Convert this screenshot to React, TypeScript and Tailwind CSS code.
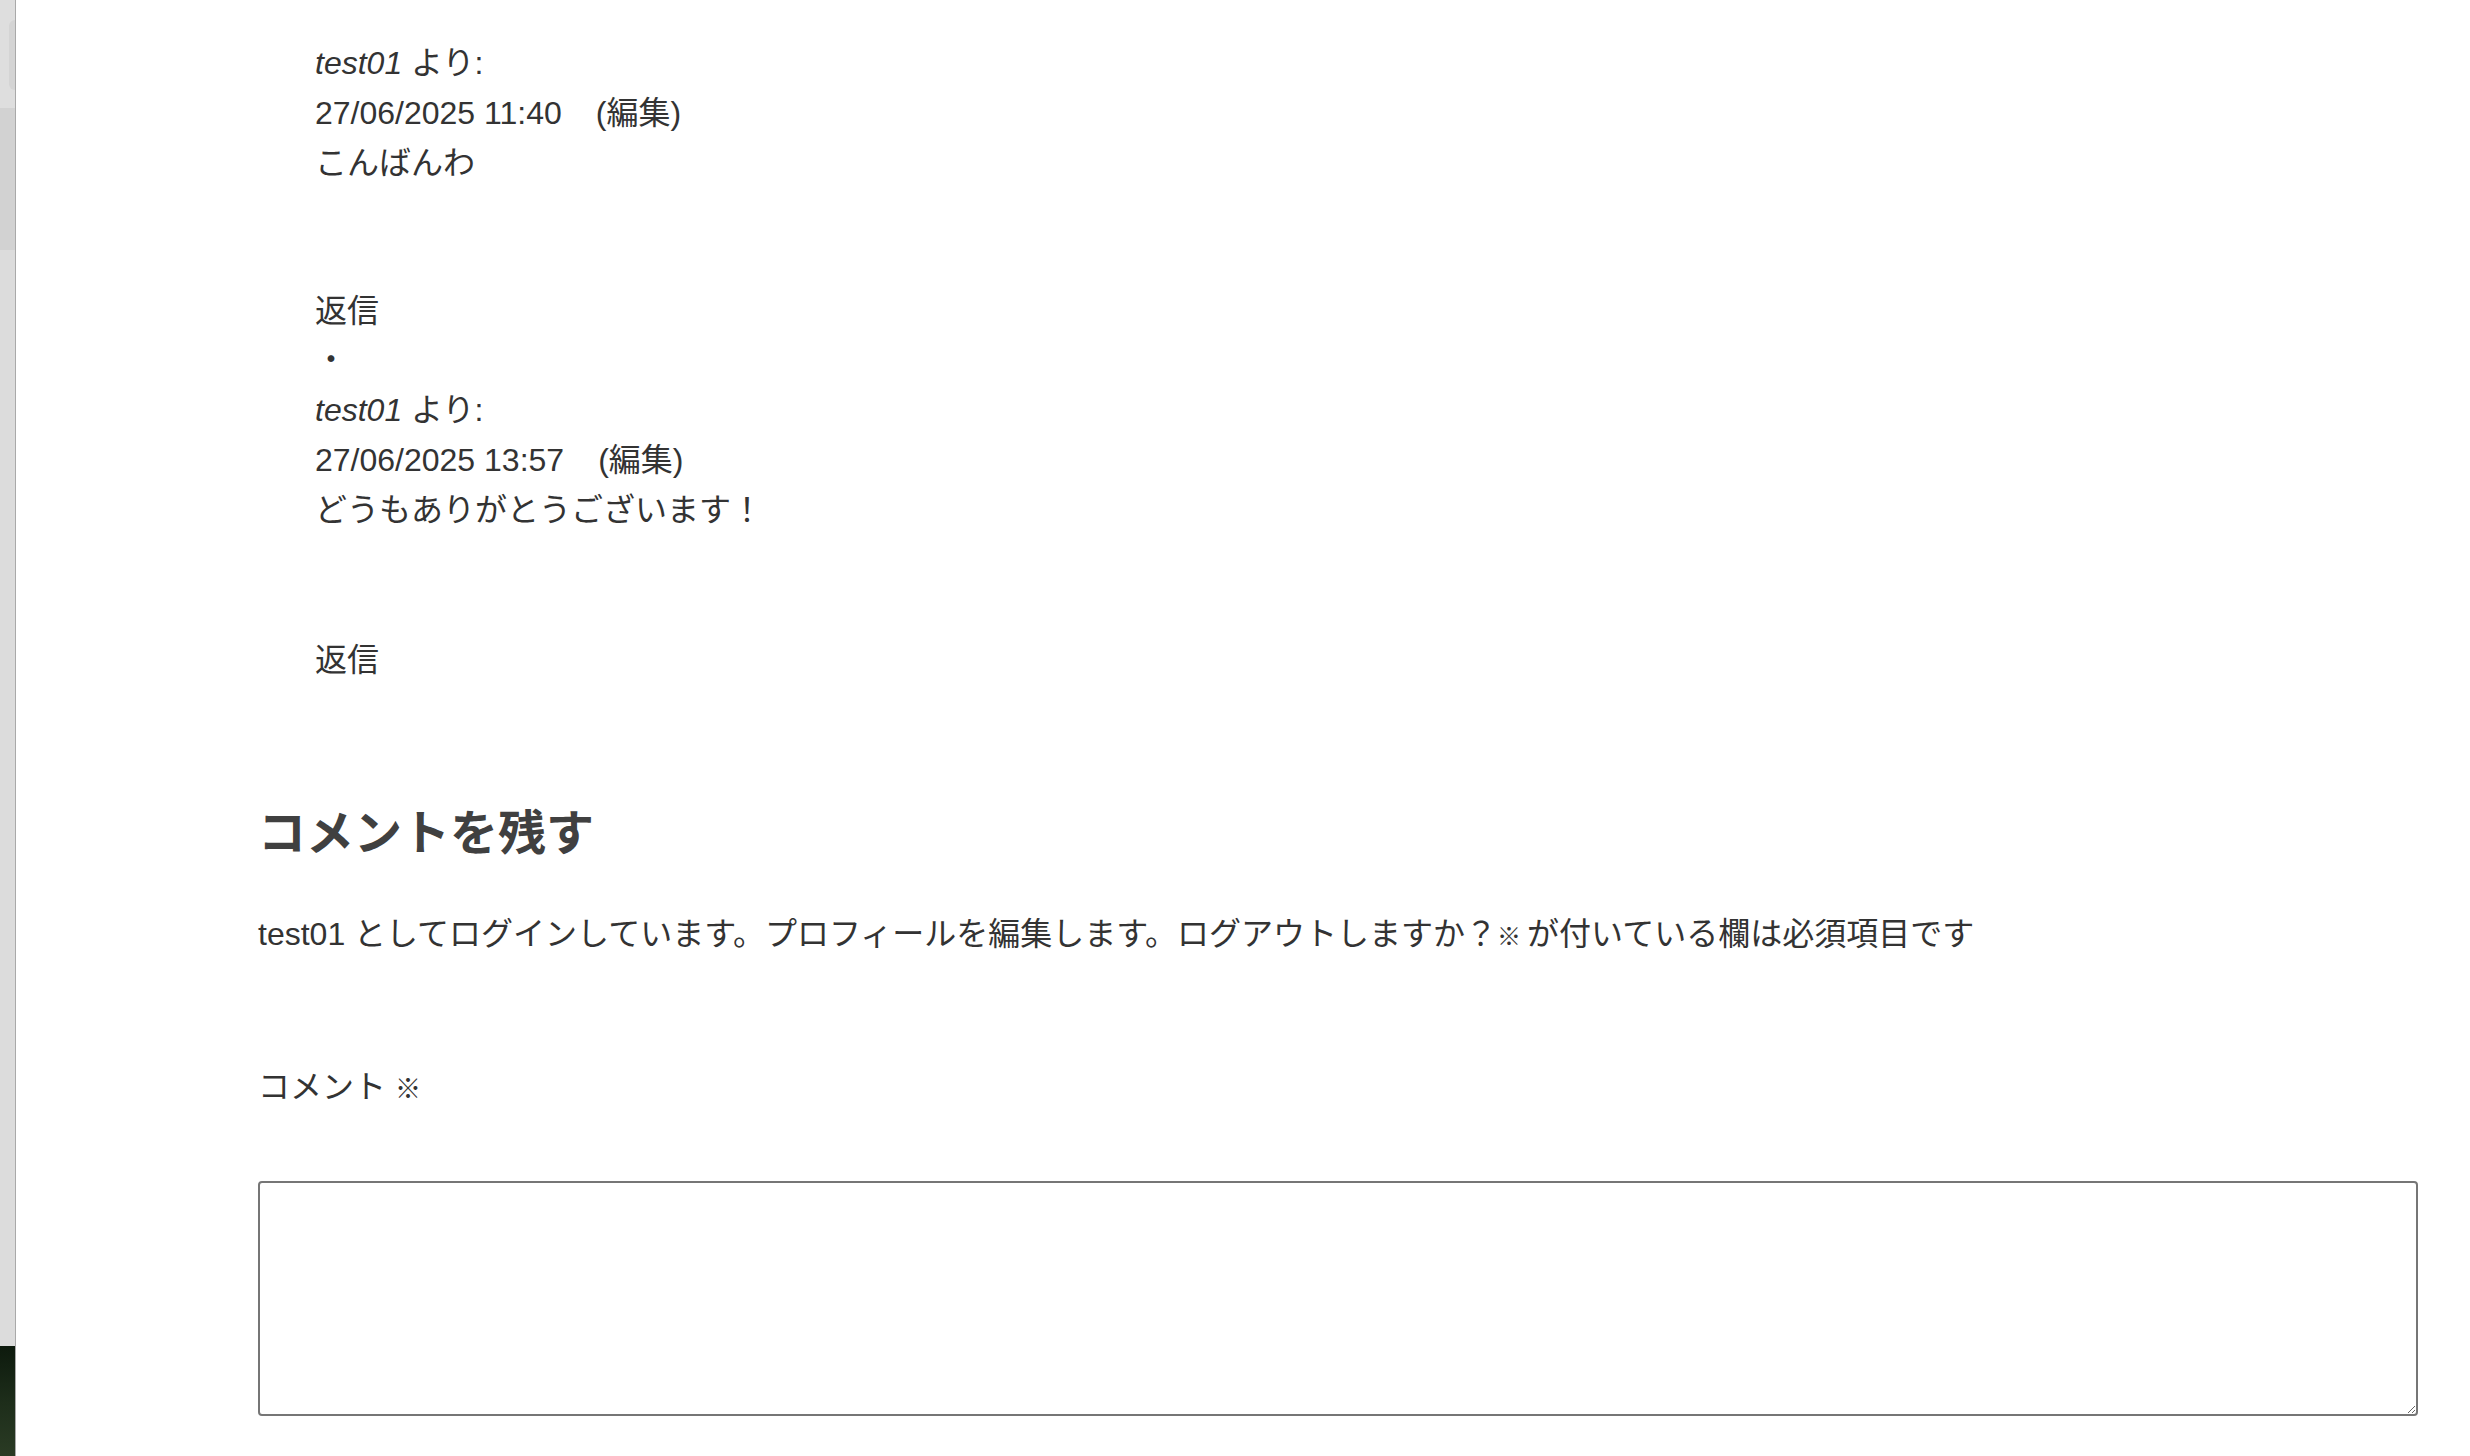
import React from 'react'

const font = { fontFamily: '"Liberation Sans", "Noto Sans CJK JP", sans-serif' }

type Reply = {
  author: string
  date: string
  body: string
}

const replies: Reply[] = [
  { author: 'test01', date: '27/06/2025 11:40', body: 'こんばんわ' },
  { author: 'test01', date: '27/06/2025 13:57', body: 'どうもありがとうございます！' },
]

function ReplyItem({ reply }: { reply: Reply }) {
  return (
    <div>
      <div className="h-[50px] leading-[50px]">
        <em className="italic">{reply.author}</em> より:
      </div>
      <div className="h-[50px] leading-[50px]">
        {reply.date}
        <span className="ml-[34px]">(編集)</span>
      </div>
      <div className="h-[50px] leading-[50px]">{reply.body}</div>
    </div>
  )
}

export default function App() {
  return (
    <div className="flex min-h-screen bg-white text-[#333333]" style={font}>
      {/* left edge of the window behind */}
      <div className="flex w-[16px] shrink-0 flex-col border-r border-[#a9a9a9]">
        <div className="relative h-[108px] bg-[#dedede]">
          <div className="absolute right-0 top-[20px] h-[70px] w-[6px] rounded-l-md bg-[#d4d4d4]" />
        </div>
        <div className="h-[142px] bg-[#d2d2d2]" />
        <div className="flex-1 bg-[#dcdcdc]" />
        <div className="h-[110px] bg-gradient-to-b from-[#0d1a0d] via-[#1d2d1a] to-[#2a3b24]" />
      </div>

      <main className="flex-1 pl-[242px] pr-[52px] pt-[38px] text-[32px]">
        <div className="pl-[57px]">
          <ReplyItem reply={replies[0]} />
          <div className="mt-[99px] h-[48px] leading-[48px]">返信</div>
          <div className="h-[50px] leading-[50px]">・</div>
          <ReplyItem reply={replies[1]} />
          <div className="mt-[100px] h-[50px] leading-[50px]">返信</div>
        </div>

        <h3 className="mt-[119px] h-[60px] text-[48px] font-bold leading-[60px] text-[#404040]">
          コメントを残す
        </h3>

        <p className="mt-[45px] h-[50px] leading-[50px]">
          test01 としてログインしています。プロフィールを編集します。ログアウトしますか？
          <span className="text-[24px] font-bold">※</span>
          <span className="ml-[6px]">が付いている欄は必須項目です</span>
        </p>

        <label className="mt-[103px] block h-[50px] leading-[50px]">
          コメント <span className="text-[26px] font-bold">※</span>
        </label>

        <textarea
          className="mt-[69px] block h-[235px] w-full rounded-[4px] border-2 border-[#767676] bg-white"
          aria-label="コメント"
        />
      </main>
    </div>
  )
}
